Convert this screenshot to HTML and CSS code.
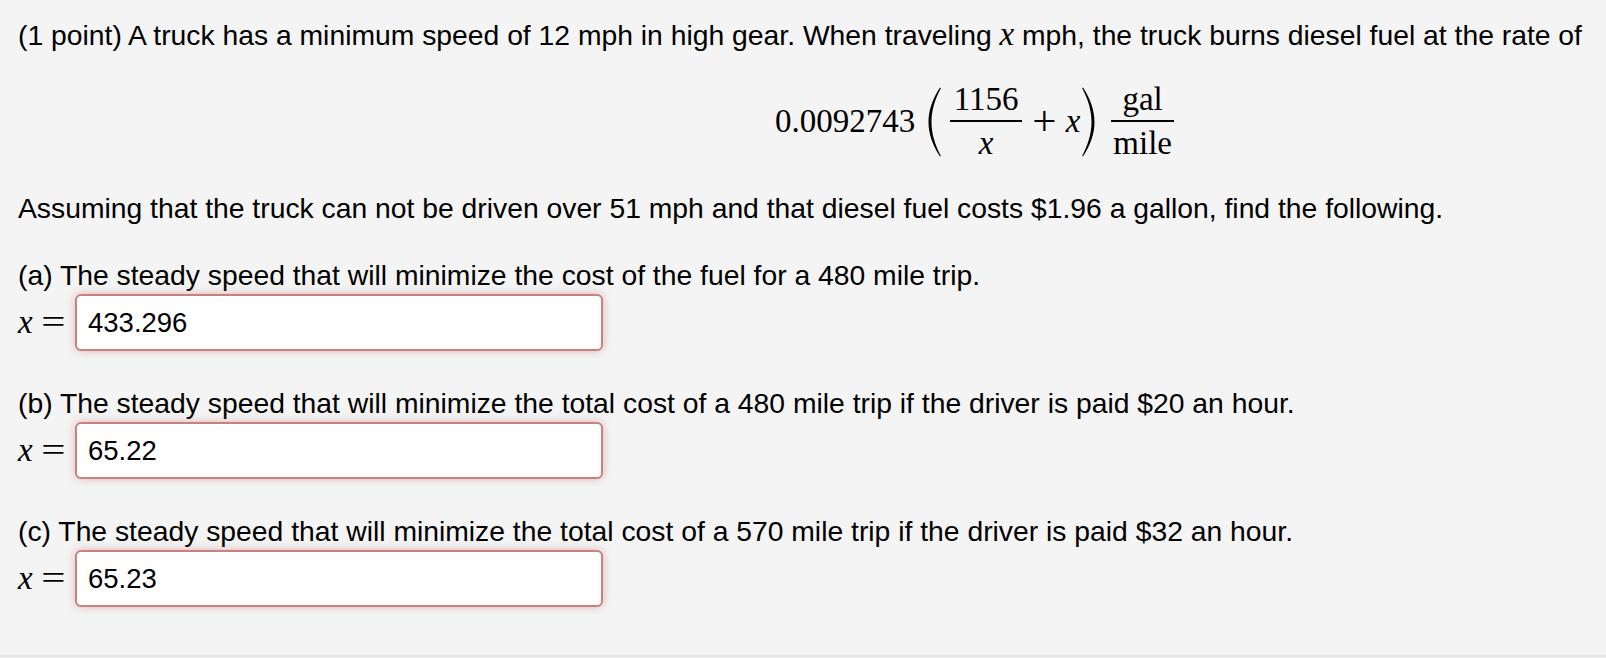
FILE: index.html
```html
<!DOCTYPE html>
<html>
<head>
<meta charset="utf-8">
<link rel="stylesheet" href="styles.css">
</head>
<body>
<div class="problem">
  <p class="line first">(1 point) A truck has a minimum speed of 12 mph in high gear. When traveling <span class="mi">x</span> mph, the truck burns diesel fuel at the rate of</p>

  <div class="display">
    <div class="formula">
      <span class="mn coef">0.0092743</span>
      <svg class="paren" width="14" height="70" viewBox="0 0 14 70"><path d="M13,0.5 C5,13 1.5,24 1.5,35 C1.5,46 5,57 13,69.5 L13.8,68.8 C7.5,57 4.5,46 4.5,35 C4.5,24 7.5,13 13.8,1.2 Z"/></svg>
      <span class="frac f1"><span class="num">1156</span><span class="bar"></span><span class="den mi">x</span></span>
      <span class="op plus">+</span>
      <span class="mi xv">x</span>
      <svg class="paren close" width="14" height="70" viewBox="0 0 14 70"><path d="M13,0.5 C5,13 1.5,24 1.5,35 C1.5,46 5,57 13,69.5 L13.8,68.8 C7.5,57 4.5,46 4.5,35 C4.5,24 7.5,13 13.8,1.2 Z"/></svg>
      <span class="frac f2"><span class="num">gal</span><span class="bar"></span><span class="den">mile</span></span>
    </div>
  </div>

  <p class="line assume">Assuming that the truck can not be driven over 51 mph and that diesel fuel costs $1.96 a gallon, find the following.</p>

  <div class="part">
    <p class="line">(a) The steady speed that will minimize the cost of the fuel for a 480 mile trip.</p>
    <div class="answer">
      <span class="lab"><span class="mi">x</span><span class="op eq">=</span></span>
      <input class="ans" type="text" value="433.296" readonly>
    </div>
  </div>

  <div class="part">
    <p class="line">(b) The steady speed that will minimize the total cost of a 480 mile trip if the driver is paid $20 an hour.</p>
    <div class="answer">
      <span class="lab"><span class="mi">x</span><span class="op eq">=</span></span>
      <input class="ans" type="text" value="65.22" readonly>
    </div>
  </div>

  <div class="part">
    <p class="line">(c) The steady speed that will minimize the total cost of a 570 mile trip if the driver is paid $32 an hour.</p>
    <div class="answer">
      <span class="lab"><span class="mi">x</span><span class="op eq">=</span></span>
      <input class="ans" type="text" value="65.23" readonly>
    </div>
  </div>
</div>
</body>
</html>
```

FILE: styles.css
```css
html, body {
  margin: 0;
  padding: 0;
  background: #f4f4f4;
}

body {
  font-family: "Liberation Sans", Helvetica, Arial, sans-serif;
  font-size: 28.3px;
  color: #000;
}

.problem {
  background: #f4f4f4;
  padding: 19px 18px 48px;
  border-bottom: 2px solid #e2e2e2;
}

.line {
  margin: 0;
  line-height: 32px;
  white-space: nowrap;
}

.mi {
  font-family: "Liberation Serif", "Times New Roman", serif;
  font-style: italic;
  font-size: 33px;
}

.line .mi {
  font-size: 33px;
  line-height: 20px;
}

.display {
  margin: 32px 0;
  padding-left: 757px;
}

.formula {
  display: flex;
  align-items: center;
  height: 77px;
  font-family: "Liberation Serif", "Times New Roman", serif;
  font-size: 33px;
  line-height: 33px;
}

.coef {
  margin-right: 12px;
}

.paren {
  display: block;
  fill: #000;
  margin-right: 9px;
}

.paren.close {
  transform: scaleX(-1);
  margin-left: 2px;
  margin-right: 15px;
}

.frac {
  display: flex;
  flex-direction: column;
  align-items: center;
}

.f1 {
  padding: 0 3.5px;
}

.f2 {
  padding: 0 2px;
}

.num {
  padding-bottom: 4px;
}

.bar {
  align-self: stretch;
  height: 2px;
  background: #000;
  margin: 0 -3.5px;
}

.f2 .bar {
  margin: 0 -2px;
}

.den {
  padding-top: 5px;
}

.op {
  display: inline-block;
  transform: scaleX(1.3);
}

.op.plus {
  transform: scale(1.3);
  margin-left: 12.5px;
}

.xv {
  margin-left: 12.5px;
}

.assume {
  margin-bottom: 35px;
}

.part + .part {
  margin-top: 36px;
}

.part .line {
  margin-bottom: 3px;
}

.answer {
  display: flex;
  align-items: center;
  height: 57px;
}

.lab {
  display: flex;
  align-items: center;
  width: 57px;
  flex: 0 0 57px;
  font-family: "Liberation Serif", "Times New Roman", serif;
  font-size: 33px;
  line-height: 33px;
}

.eq {
  margin-left: 11px;
}

.ans {
  box-sizing: border-box;
  width: 528px;
  height: 57px;
  margin: 0;
  padding: 0 11px;
  border: 2px solid #c6827e;
  border-radius: 6px;
  background: #fff;
  box-shadow: 0 0 8px rgba(200, 120, 115, 0.5);
  font-family: "Liberation Sans", Helvetica, Arial, sans-serif;
  font-size: 27.5px;
  color: #000;
  outline: none;
}
```
